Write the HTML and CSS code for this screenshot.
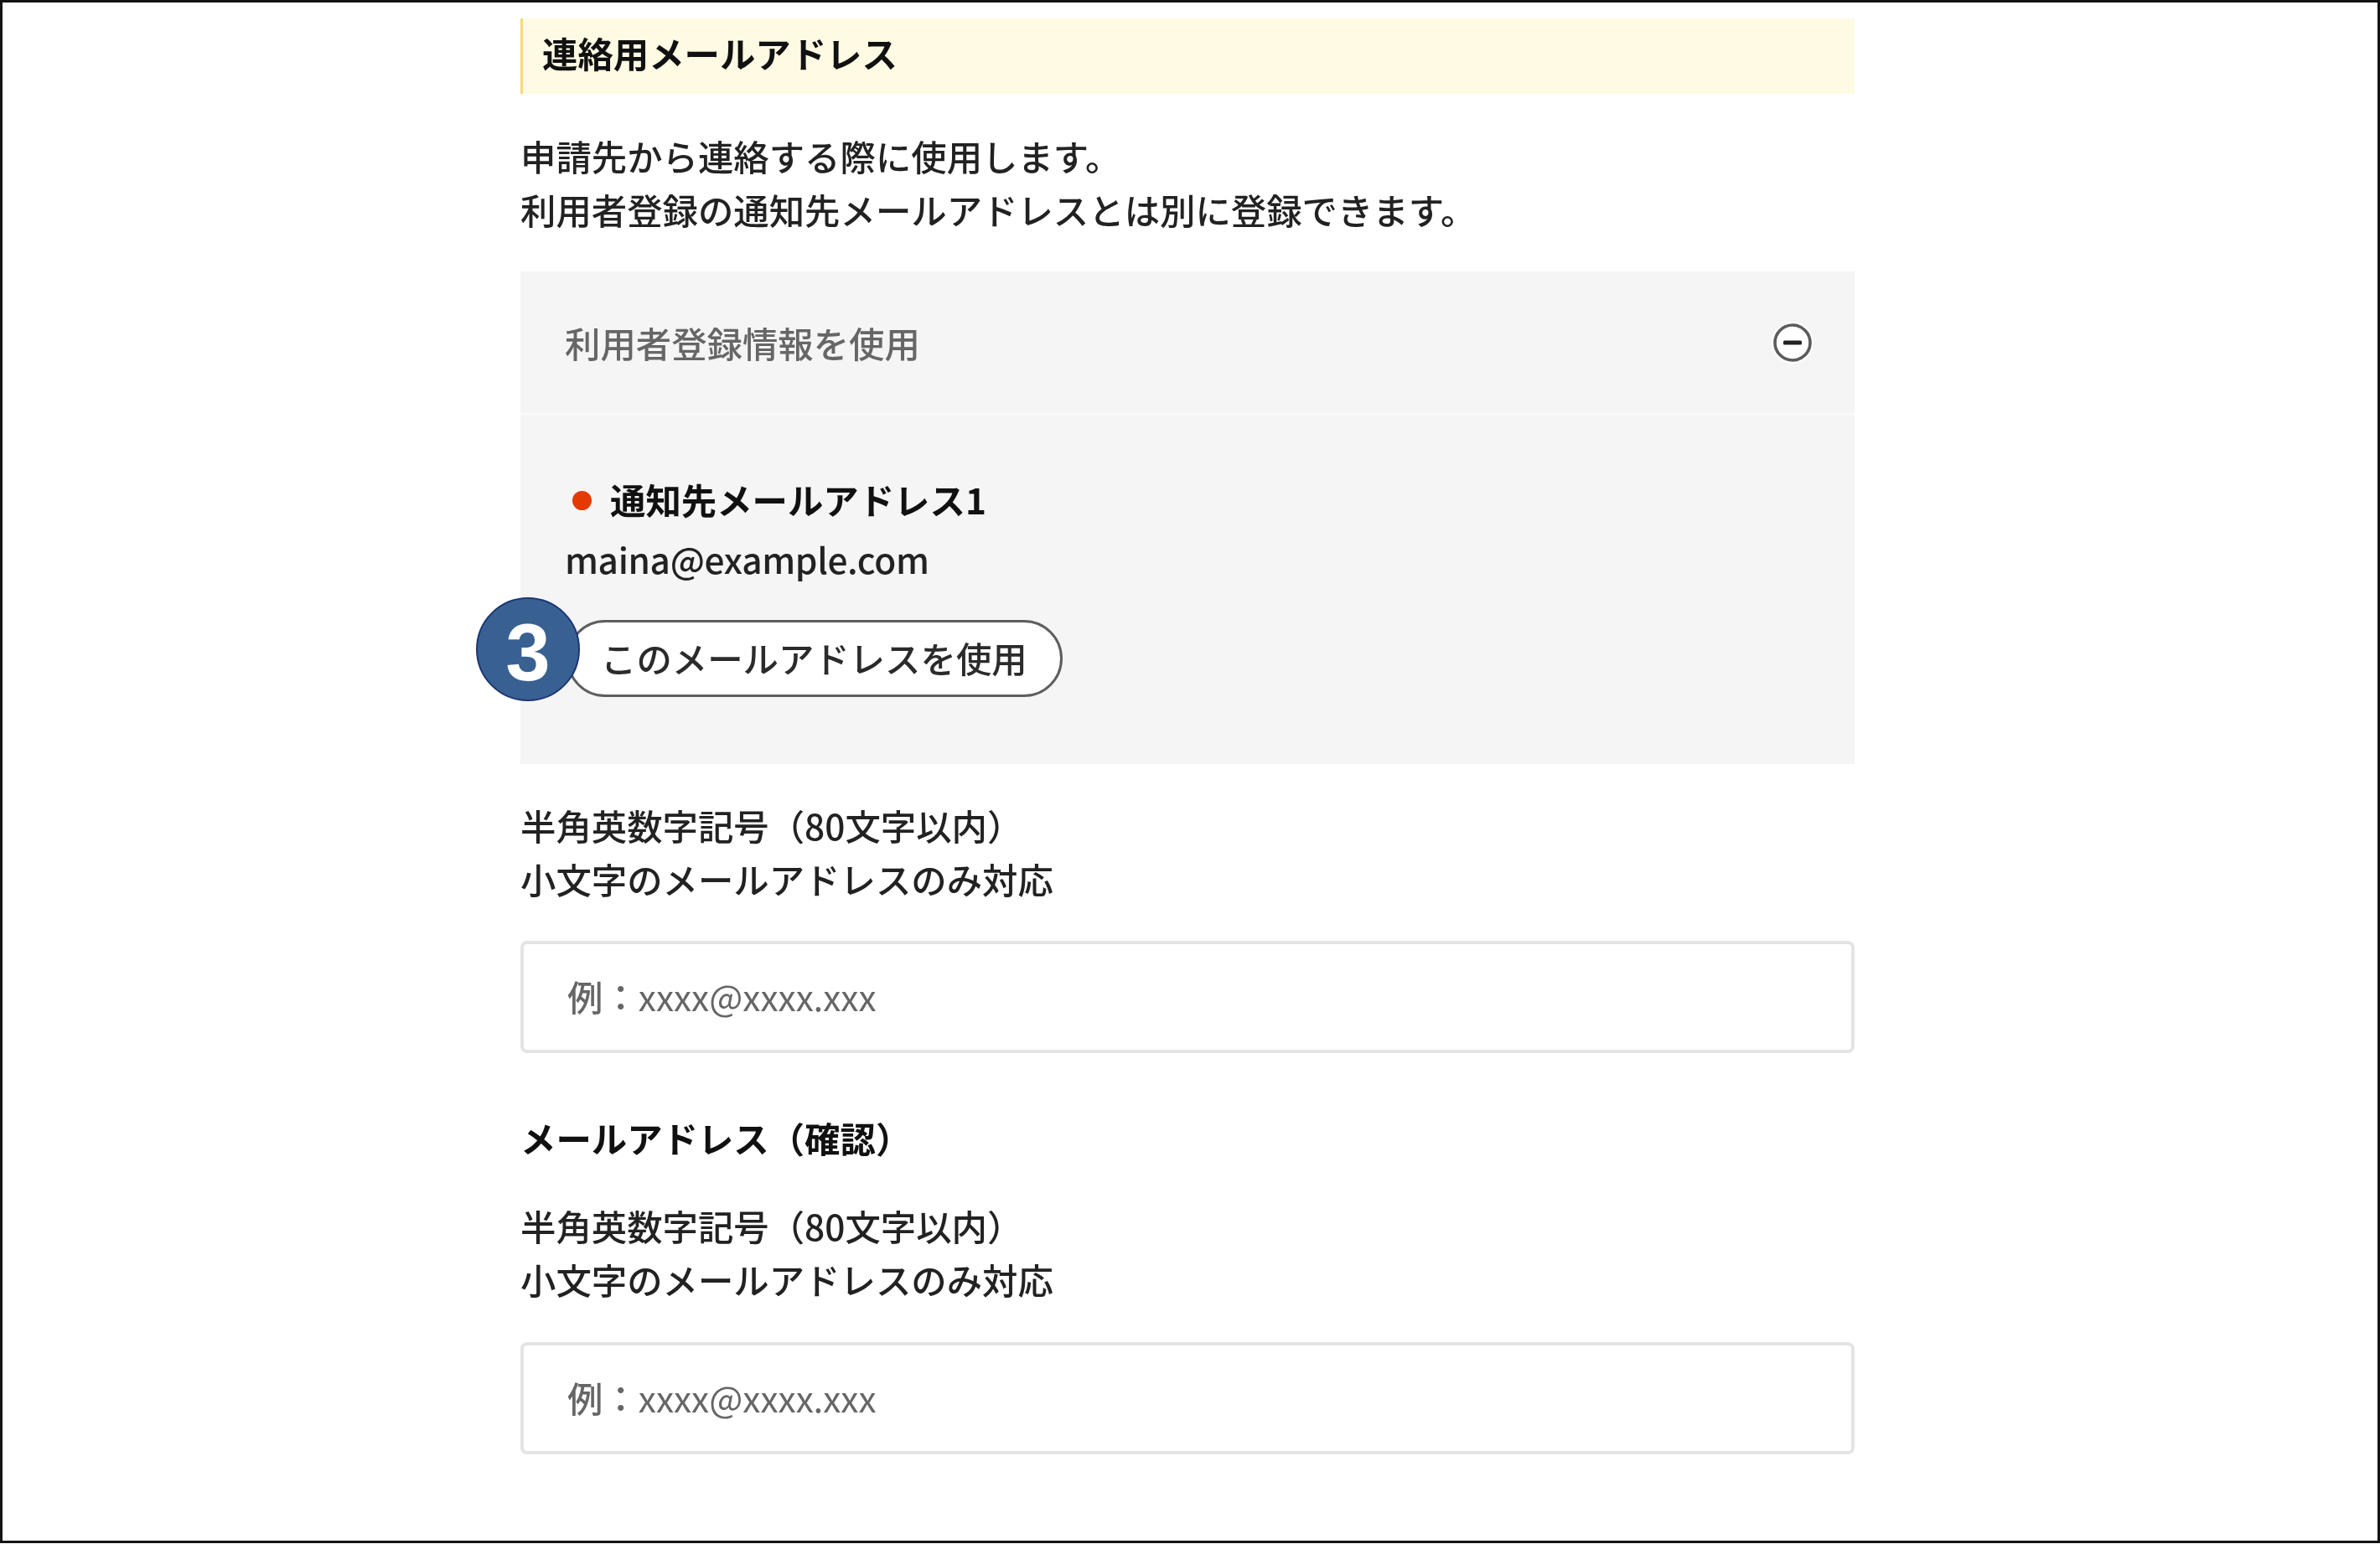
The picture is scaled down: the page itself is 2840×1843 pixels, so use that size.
FILE: index.html
```html
<!DOCTYPE html>
<html lang="ja">
<head>
<meta charset="utf-8">
<title>連絡用メールアドレス</title>
<link rel="stylesheet" href="styles.css">
</head>
<body>
<main class="frame">
  <div class="column">
    <h2 class="section-title">連絡用メールアドレス</h2>
    <p class="text lead">申請先から連絡する際に使用します。<br>利用者登録の通知先メールアドレスとは別に登録できます。</p>
    <section class="panel">
      <div class="panel-head">
        <span class="panel-title">利用者登録情報を使用</span>
        <svg class="minus-icon" viewBox="0 0 50 50" aria-hidden="true">
          <circle cx="25" cy="25" r="25" fill="#fff" opacity="0.8"/>
          <circle cx="25" cy="25" r="21" fill="#fff" stroke="#5c5c5c" stroke-width="3.6"/>
          <rect x="14" y="22.5" width="22" height="5" rx="1.5" fill="#222"/>
        </svg>
      </div>
      <div class="panel-body">
        <div class="address-title"><span class="dot"></span>通知先メールアドレス1</div>
        <div class="address">maina@example.com</div>
        <button class="use-button" type="button">このメールアドレスを使用<span class="step-badge">3</span></button>
      </div>
    </section>
    <p class="text note">半角英数字記号（80文字以内）<br>小文字のメールアドレスのみ対応</p>
    <div class="field">例：<span class="field-sample">xxxx@xxxx.xxx</span></div>
    <h3 class="field-label">メールアドレス（確認）</h3>
    <p class="text note note-tight">半角英数字記号（80文字以内）<br>小文字のメールアドレスのみ対応</p>
    <div class="field">例：<span class="field-sample">xxxx@xxxx.xxx</span></div>
  </div>
</main>
</body>
</html>
```
FILE: styles.css
```css
* { box-sizing: border-box; }
html, body { margin: 0; padding: 0; background: #fff; }
body {
  font-family: "Noto Sans CJK JP", "Noto Sans", sans-serif;
  font-size: 42.4px;
  font-weight: 500;
  color: #222;
}
.frame {
  width: 2840px;
  height: 1842px;
  border: 3px solid #141414;
  background: #fff;
  padding-top: 19px;
  padding-left: 618px;
  overflow: hidden;
}
.column { width: 1592px; filter: blur(0.7px); }
.section-title {
  margin: 0;
  height: 90px;
  padding: 0 0 10px 23px;
  display: flex;
  align-items: center;
  background: #fffae3;
  border-left: 3px solid #f6d976;
  font-size: 42.4px;
  font-weight: 700;
  color: #111;
}
.text { margin: 0; line-height: 63.5px; color: #222; }
.lead { margin-top: 42px; }
.panel { margin-top: 43px; background: #f5f5f5; }
.panel-head {
  height: 172px;
  padding: 0 49px 0 53px;
  display: flex;
  align-items: center;
  justify-content: space-between;
  border-bottom: 3px solid #f9f9f9;
}
.panel-title { color: #666; }
.minus-icon { width: 50px; height: 50px; display: block; }
.panel-body { padding: 68px 53px 80px; }
.address-title {
  display: flex;
  align-items: center;
  line-height: 63px;
  font-weight: 700;
  color: #111;
}
.dot {
  width: 23px;
  height: 23px;
  margin: 3px 22px 0 9px;
  border-radius: 50%;
  background: #e23a00;
}
.address {
  margin-top: 8px;
  line-height: 63px;
  color: #222;
  letter-spacing: -0.35px;
}
.use-button {
  position: relative;
  display: block;
  margin: 42px 0 0 2px;
  width: 592px;
  height: 92px;
  padding: 0 0 4px 38px;
  text-align: left;
  font: inherit;
  color: #2b2b2b;
  background: #fff;
  border: 3px solid #5e5e5e;
  border-radius: 46px;
}
.step-badge {
  position: absolute;
  left: -111px;
  top: -30px;
  width: 124px;
  height: 124px;
  padding-top: 8px;
  display: flex;
  align-items: center;
  justify-content: center;
  border-radius: 50%;
  background: #386192;
  border: 2px solid #1c3574;
  font-family: "Liberation Sans", Arial, sans-serif;
  font-size: 96px;
  font-weight: 700;
  color: #fff;
}
.note { margin-top: 41px; }
.field {
  margin-top: 43px;
  height: 134px;
  padding: 0 0 4px 52px;
  display: flex;
  align-items: center;
  background: #fff;
  border: 4px solid #e4e4e4;
  border-radius: 8px;
  color: #666;
}
.field-sample { font-size: 42.4px; font-weight: 400; }
.field-label {
  margin: 69px 0 0;
  line-height: 64px;
  font-size: 42.4px;
  font-weight: 700;
  color: #111;
}
.note-tight { margin-top: 41px; }
.note-tight + .field { margin-top: 44px; }
```
